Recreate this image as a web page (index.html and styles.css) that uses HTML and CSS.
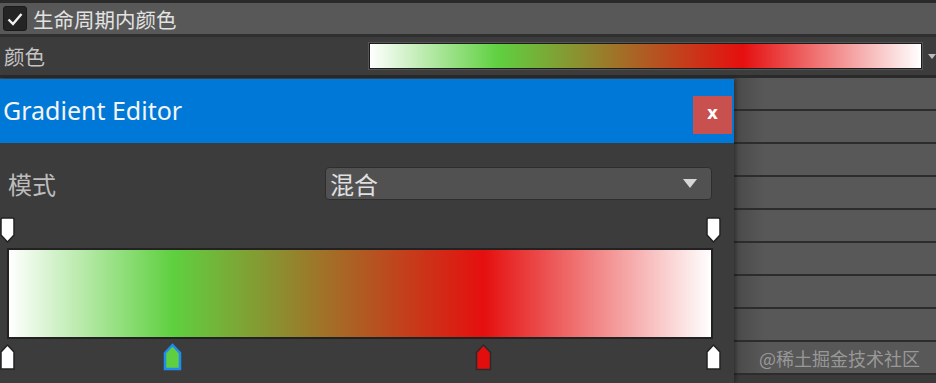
FILE: index.html
```html
<!DOCTYPE html>
<html lang="zh-CN">
<head>
  <meta charset="UTF-8" />
  <meta name="viewport" content="width=device-width, initial-scale=1.0"/>
  <title>Gradient Editor</title>
  <link rel="stylesheet" href="styles.css">
</head>
<body>

<div class="inspector">
  <div class="row toggle">
    <span class="checkbox">
      <svg width="18" height="16" viewBox="0 0 18 16"><path d="M2.5 8.5 L7 13 L15.5 3" fill="none" stroke="#f2f2f2" stroke-width="2.4"/></svg>
    </span>
    <span class="toggle-label">生命周期内颜色</span>
  </div>
  <div class="row color">
    <span class="color-label">颜色</span>
    <div class="swatch gradient"></div>
    <span class="swatch-arrow"></span>
  </div>
  <div class="rows">
    <div class="row plain"></div>
    <div class="row plain"></div>
    <div class="row plain"></div>
    <div class="row plain"></div>
    <div class="row plain"></div>
    <div class="row plain"></div>
    <div class="row plain"></div>
    <div class="row plain"></div>
    <div class="row plain"></div>
  </div>
  <div class="watermark">@稀土掘金技术社区</div>
</div>

<div class="dialog">
  <div class="titlebar">
    <span class="title">Gradient Editor</span>
    <button class="close">x</button>
  </div>
  <div class="dialog-body">
    <div class="mode-row">
      <span class="mode-label">模式</span>
      <div class="select">
        <span>混合</span>
        <span class="caret"></span>
      </div>
    </div>

    <div class="keys top">
      <svg class="key" style="left: 0px" width="15" height="26" viewBox="0 0 15 26"><path d="M2.5 1 H12.5 Q14 1 14 2.5 V18 L7.5 25 L1 18 V2.5 Q1 1 2.5 1 Z" fill="#fff" stroke="#222" stroke-width="1.5"/></svg>
      <svg class="key" style="left: 706px" width="15" height="26" viewBox="0 0 15 26"><path d="M2.5 1 H12.5 Q14 1 14 2.5 V18 L7.5 25 L1 18 V2.5 Q1 1 2.5 1 Z" fill="#fff" stroke="#222" stroke-width="1.5"/></svg>
    </div>

    <div class="bar gradient"></div>

    <div class="keys bottom">
      <svg class="key" style="left: 0px" width="15" height="27" viewBox="0 0 15 27"><path d="M1 9 L7.5 2 L14 9 V26 H1 Z" fill="#fff" stroke="#222" stroke-width="1.5"/></svg>
      <svg class="key" style="left: 163px" width="19" height="28" viewBox="0 0 19 28"><path d="M2 10 L9.5 2 L17 10 V26 H2 Z" fill="#5fcf3f" stroke="#1e8cf0" stroke-width="2.5"/></svg>
      <svg class="key" style="left: 475px" width="17" height="28" viewBox="0 0 17 28"><path d="M1.5 9.5 L8.5 2 L15.5 9.5 V26.5 H1.5 Z" fill="#e20e0e" stroke="#2a2a2a" stroke-width="1.5"/></svg>
      <svg class="key" style="left: 706px" width="15" height="27" viewBox="0 0 15 27"><path d="M1 9 L7.5 2 L14 9 V26 H1 Z" fill="#fff" stroke="#222" stroke-width="1.5"/></svg>
    </div>
  </div>
</div>

</body>
</html>
```

FILE: styles.css
```css
body {
  margin: 0;
  width: 936px;
  height: 383px;
  overflow: hidden;
  background: #3a3a3a;
  font-family: 'Noto Sans CJK SC', 'Noto Sans', sans-serif;
  position: relative;
}
.inspector {
  border-top: 3px solid #2a2a2a;
}
.row {
  display: flex;
  align-items: center;
  box-sizing: border-box;
}
.toggle {
  height: 34px;
  background: #585858;
  border-bottom: 3px solid #2f2f2f;
  padding-left: 3px;
}
.checkbox {
  width: 24px;
  height: 25px;
  box-sizing: border-box;
  background: #242424;
  border: 1px solid #1a1a1a;
  border-radius: 3px;
  display: flex;
  align-items: center;
  justify-content: center;
}
.toggle-label {
  margin-left: 6px;
  font-size: 20.5px;
  color: #e2e2e2;
}
.color {
  height: 41px;
  background: #3c3c3c;
  border-bottom: 3px solid #2a2a2a;
  padding-left: 4px;
}
.color-label {
  font-size: 20.5px;
  color: #c4c4c4;
  width: 365px;
}
.swatch {
  width: 554px;
  height: 26px;
  box-sizing: border-box;
  border: 1px solid #1c1c1c;
  box-shadow: 0 0 0 1px #555;
}
.swatch-arrow {
  margin-left: 6px;
  width: 0;
  height: 0;
  border-left: 4px solid transparent;
  border-right: 4px solid transparent;
  border-top: 5px solid #bbb;
}
.gradient {
  background: linear-gradient(to right, #ffffff 0%, #5fd040 23.3%, #e50f0f 67.6%, #ffffff 100%);
}
.plain {
  height: 33px;
  background: linear-gradient(to right, #4a4a4a 735px, #585858 765px);
  border-bottom: 2px solid #2c2c2c;
}
.watermark {
  position: absolute;
  left: 759px;
  top: 345px;
  font-size: 18px;
  color: rgba(170, 170, 170, 0.8);
}
.dialog {
  position: absolute;
  left: 0;
  top: 79px;
  width: 734px;
  height: 304px;
  background: #3c3c3c;
  box-shadow: 2px 0 4px rgba(0, 0, 0, 0.35);
}
.titlebar {
  height: 64px;
  background: #0078d7;
  display: flex;
  align-items: center;
  justify-content: space-between;
  padding: 0 2px 0 3px;
}
.title {
  font-family: 'Noto Sans', sans-serif;
  font-size: 25px;
  color: #f4f4f4;
  margin-top: -2px;
}
.close {
  width: 39px;
  height: 38px;
  margin-top: 8px;
  border: none;
  background: #c8504e;
  color: #fff;
  font-family: 'DejaVu Sans', sans-serif;
  font-weight: bold;
  font-size: 17px;
  padding: 0 0 4px 0;
  cursor: pointer;
}
.dialog-body {
  padding-top: 24px;
}
.mode-row {
  display: flex;
  align-items: center;
  height: 33px;
  padding-left: 8px;
}
.mode-label {
  width: 317px;
  font-size: 24px;
  color: #bdbdbd;
}
.select {
  width: 387px;
  height: 33px;
  box-sizing: border-box;
  background: #515151;
  border: 1px solid #2e2e2e;
  border-radius: 4px;
  display: flex;
  align-items: center;
  justify-content: space-between;
  padding: 0 14px 0 4px;
  font-size: 24px;
  color: #e0e0e0;
}
.caret {
  width: 0;
  height: 0;
  border-left: 7px solid transparent;
  border-right: 7px solid transparent;
  border-top: 9px solid #d6d6d6;
}
.keys {
  position: relative;
  height: 27px;
}
.keys.top {
  margin-top: 17px;
}
.key {
  position: absolute;
  top: 0;
}
.bar {
  margin: 4px 0 4px 7px;
  width: 706px;
  height: 91px;
  box-sizing: border-box;
  border: 2px solid #222;
}
```
